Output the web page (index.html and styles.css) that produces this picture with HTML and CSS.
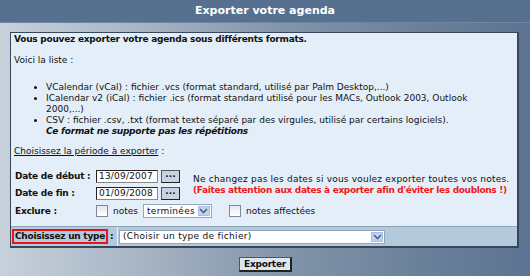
FILE: index.html
```html
<!DOCTYPE html>
<html lang="fr">
<head>
  <meta charset="UTF-8">
  <title>Exporter votre agenda</title>
  <link rel="stylesheet" href="styles.css">
</head>
<body>
  <div class="titlebar">Exporter votre agenda</div>

  <div class="panel">
    <div class="panel-body">
      <p class="intro">Vous pouvez exporter votre agenda sous différents formats.</p>
      <p class="voici">Voici la liste :</p>
      <ul class="formats">
        <li>VCalendar (vCal) : fichier .vcs (format standard, utilisé par Palm Desktop,...)</li>
        <li>ICalendar v2 (iCal) : fichier .ics (format standard utilisé pour les MACs, Outlook 2003, Outlook<br>2000,...)</li>
        <li>CSV : fichier .csv, .txt (format texte séparé par des virgules, utilisé par certains logiciels).<br><b><i>Ce format ne supporte pas les répétitions</i></b></li>
      </ul>
      <p class="periode"><u>Choisissez la période à exporter</u> :</p>

      <div class="dates">
        <span class="lbl">Date de début :</span>
        <div class="field">
          <span class="datebox">13/09/2007</span>
          <span class="pick">...</span>
        </div>
        <div class="note">
          Ne changez pas les dates si vous voulez exporter toutes vos notes.<br>
          <span class="warn">(Faites attention aux dates à exporter afin d'éviter les doublons !)</span>
        </div>

        <span class="lbl">Date de fin :</span>
        <div class="field">
          <span class="datebox">01/09/2008</span>
          <span class="pick">...</span>
        </div>

        <span class="lbl">Exclure :</span>
        <div class="field excl-opts">
          <span class="check"></span>
          <span>notes</span>
          <span class="combo small">
            <span class="combo-text">terminées</span>
            <span class="combo-arrow"><svg width="9" height="6" viewBox="0 0 9 6"><path d="M1 1l3.5 3.5L8 1" fill="none" stroke="#4d6185" stroke-width="1.6"/></svg></span>
          </span>
          <span class="check second"></span>
          <span>notes affectées</span>
        </div>
      </div>
    </div>

    <div class="type-row">
      <div class="type-label"><span class="type-box">Choisissez un type</span> :</div>
      <div class="type-field">
        <span class="combo wide">
          <span class="combo-text">(Choisir un type de fichier)</span>
          <span class="combo-arrow"><svg width="9" height="6" viewBox="0 0 9 6"><path d="M1 1l3.5 3.5L8 1" fill="none" stroke="#4d6185" stroke-width="1.6"/></svg></span>
        </span>
      </div>
    </div>
  </div>

  <div class="actions">
    <button class="export">Exporter</button>
  </div>
</body>
</html>
```

FILE: styles.css
```css
body {
  margin: 0;
  width: 530px;
  height: 276px;
  overflow: hidden;
  font-family: "DejaVu Sans", Verdana, sans-serif;
  font-size: 9px;
  line-height: 11px;
  color: #111;
  background: linear-gradient(to right, #c7d1db 0%, #a3b1c1 30%, #8193a9 55%, #6a809a 80%, #5c7492 100%);
}

b, .intro, .lbl, .type-label, .export {
  letter-spacing: -0.25px;
}

.titlebar {
  height: 22px;
  line-height: 22px;
  background-color: #56718f;
  color: #fff;
  font-weight: bold;
  font-size: 11px;
  text-align: center;
  border-bottom: 1px solid #6f86a0;
}

.panel {
  margin: 9px 11px 0 10px;
  border: 1px solid #34475b;
  border-right-width: 2px;
  border-bottom-width: 2px;
  background-color: #e3eef8;
}

.panel-body {
  padding: 1px 4px 8px 3px;
}

p {
  margin: 0;
}

.intro {
  font-weight: bold;
}

.voici {
  margin-top: 10px;
}

.formats {
  margin: 16px 0 0 0;
  padding-left: 32px;
  white-space: nowrap;
}

.periode {
  margin-top: 9px;
}

.dates {
  margin-top: 13px;
  display: grid;
  grid-template-columns: 81px 94px 1fr;
  row-gap: 4px;
  align-items: center;
  padding-left: 1px;
}

.lbl {
  font-weight: bold;
}

.field {
  display: flex;
  align-items: center;
}

.datebox {
  width: 58px;
  height: 11px;
  line-height: 11px;
  padding-left: 2px;
  background-color: #fff;
  border: 1px solid #222;
  border-right-color: #888;
  border-bottom-color: #888;
  letter-spacing: 0.2px;
}

.pick {
  margin-left: 3px;
  width: 17px;
  height: 11px;
  line-height: 7px;
  text-align: center;
  font-weight: bold;
  background-color: #c6d3e0;
  border: 1px solid #555;
  border-right-color: #222;
  border-bottom-color: #222;
}

.note {
  grid-row: 1 / span 2;
  grid-column: 3;
  padding-left: 3px;
  letter-spacing: 0.2px;
  white-space: nowrap;
}

.warn {
  color: #f01818;
  font-weight: bold;
  letter-spacing: -0.35px;
}

.excl-opts {
  grid-column: 2 / span 2;
  gap: 5px;
}

.check {
  width: 10px;
  height: 10px;
  background: linear-gradient(#e4e8ec, #fff);
  border: 1px solid #7a8a9c;
}

.check.second {
  margin-left: 12px;
}

.combo {
  display: flex;
  align-items: center;
  height: 12px;
  background-color: #fff;
  border: 1px solid #8fa6bd;
  letter-spacing: 0.3px;
}

.combo-text {
  flex: 1;
  padding-left: 3px;
}

.combo-arrow {
  width: 12px;
  height: 10px;
  margin-right: 1px;
  display: flex;
  align-items: center;
  justify-content: center;
  background-color: #c3d2f2;
  border: 1px solid #a9bce4;
  box-sizing: border-box;
}

.combo.small {
  width: 67px;
}

.type-row {
  display: flex;
  height: 19px;
  background-color: #b4c9db;
  border-top: 1px solid #8ea3b6;
}

.type-label {
  width: 105px;
  display: flex;
  align-items: center;
  padding-left: 1px;
  font-weight: bold;
  white-space: nowrap;
  border-right: 1px solid #e8f0f7;
}

.type-box {
  border: 2px solid #e8141c;
  padding: 0 1px;
  line-height: 11px;
  margin-right: 2px;
}

.type-field {
  display: flex;
  align-items: center;
  padding-left: 1px;
}

.combo.wide {
  width: 264px;
  height: 12px;
}

.actions {
  text-align: center;
  margin-top: 9px;
  padding-left: 1px;
}

.export {
  font-family: "DejaVu Sans", Verdana, sans-serif;
  font-size: 9px;
  font-weight: bold;
  height: 15px;
  padding: 0 4px;
  line-height: 11px;
  color: #111;
  background-color: #dde5ee;
  border: 1px solid #555;
  border-right: 2px solid #222;
  border-bottom: 2px solid #222;
}
```
